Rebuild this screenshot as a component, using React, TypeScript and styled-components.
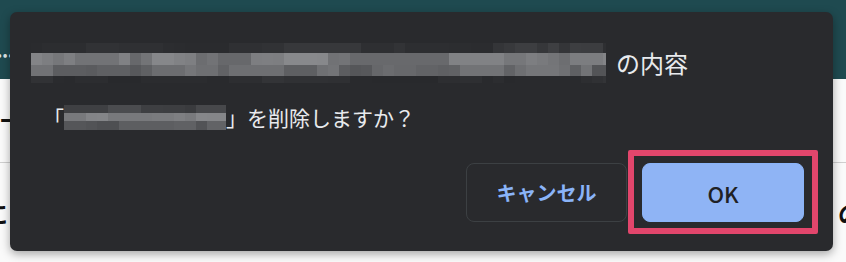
import styled, { createGlobalStyle } from "styled-components";

const GlobalStyle = createGlobalStyle`
  html, body {
    margin: 0;
    padding: 0;
    background: #fafafa;
    overflow: hidden;
  }
  * {
    box-sizing: border-box;
  }
`;

type Band = { h: number; lo: number; hi: number; curve: number };

// deterministic noise so the redaction looks the same on every render
const makeRandom = (seed: number) => {
  let s = seed;
  return () => {
    s = (s + 0x6d2b79f5) | 0;
    let t = Math.imul(s ^ (s >>> 15), 1 | s);
    t = (t + Math.imul(t ^ (t >>> 7), 61 | t)) ^ t;
    return ((t ^ (t >>> 14)) >>> 0) / 4294967296;
  };
};

const Redacted = ({
  width,
  bands,
  cell,
  seed,
}: {
  width: number;
  bands: Band[];
  cell: number;
  seed: number;
}) => {
  const rnd = makeRandom(seed);
  const height = bands.reduce((a, b) => a + b.h, 0);
  const cols = Math.ceil(width / cell);
  const rects: JSX.Element[] = [];
  let y = 0;
  bands.forEach((band, bi) => {
    let prev = rnd();
    for (let c = 0; c < cols; c++) {
      // smooth neighbours a bit, like a pixelated blur
      const r = rnd() < 0.5 ? prev : prev * 0.4 + rnd() * 0.6;
      prev = r;
      const v = Math.round(band.lo + Math.pow(r, band.curve) * (band.hi - band.lo));
      rects.push(
        <rect
          key={`${bi}-${c}`}
          x={c * cell}
          y={y}
          width={cell + 0.5}
          height={band.h + 0.5}
          fill={`rgb(${v},${v + 1},${v + 4})`}
        />
      );
    }
    y += band.h;
  });
  return (
    <svg width={width} height={height} viewBox={`0 0 ${width} ${height}`} style={{ flexShrink: 0, display: "block" }}>
      {rects}
    </svg>
  );
};

const Page = styled.div`
  position: relative;
  width: 846px;
  height: 262px;
  overflow: hidden;
  font-family: "Noto Sans CJK JP", "Noto Sans", sans-serif;
`;

const Header = styled.div`
  height: 79px;
  background: #1f4a50;
  display: flex;
  align-items: center;
  padding-top: 28px;
`;

const Ellipsis = styled.span`
  color: #dfe6e7;
  font-size: 14px;
  margin-left: -3px;
  letter-spacing: 1px;
`;

const Row = styled.div<{ $h: number; $line?: boolean }>`
  height: ${(p) => p.$h}px;
  display: flex;
  align-items: center;
  justify-content: space-between;
  border-bottom: ${(p) => (p.$line ? "1px solid #cfcfcf" : "none")};
  color: #111;
  font-size: 24px;
  font-weight: 700;
`;

const Fragment = styled.span<{ $shift: number }>`
  margin-left: ${(p) => (p.$shift < 0 ? p.$shift : 0)}px;
  margin-right: ${(p) => (p.$shift > 0 ? -p.$shift : 0)}px;
`;

const Dialog = styled.div`
  position: absolute;
  top: 12px;
  left: 10px;
  width: 823px;
  height: 239px;
  background: #292a2d;
  border-radius: 7px;
  box-shadow: 0 3px 10px rgba(0, 0, 0, 0.35);
  padding: 31px 29px 29px 33px;
  display: flex;
  flex-direction: column;
  color: #e8eaed;
`;

const Title = styled.div`
  display: flex;
  align-items: center;
  gap: 10px;
  height: 40px;
  margin-left: -12px;
  font-size: 24px;
  line-height: 1;
`;

const Message = styled.div`
  display: flex;
  align-items: center;
  height: 25px;
  margin-top: 22px;
  font-size: 21px;
  line-height: 1;
`;

const Actions = styled.div`
  margin-top: auto;
  display: flex;
  justify-content: flex-end;
  gap: 15px;
`;

const Button = styled.button<{ $primary?: boolean }>`
  width: ${(p) => (p.$primary ? 162 : 161)}px;
  height: 59px;
  border-radius: 8px;
  border: 1px solid ${(p) => (p.$primary ? "#8ab4f8" : "#3c4043")};
  background: ${(p) => (p.$primary ? "#8fb4f5" : "transparent")};
  color: ${(p) => (p.$primary ? "#202124" : "#8ab4f8")};
  font-family: "Noto Sans CJK JP", "Noto Sans", sans-serif;
  font-size: ${(p) => (p.$primary ? 22 : 20)}px;
  font-weight: ${(p) => (p.$primary ? 500 : 700)};
  padding: 0;
  cursor: pointer;
`;

const Highlight = styled.div`
  position: relative;
  &::after {
    content: "";
    position: absolute;
    inset: -13px -14px -12px -14px;
    border: 6px solid #e2466c;
    border-radius: 2px;
    pointer-events: none;
  }
`;

export default function App() {
  return (
    <>
      <GlobalStyle />
      <Page>
        <Header>
          <Ellipsis>•••</Ellipsis>
        </Header>
        <Row $h={84} $line>
          <Fragment $shift={0}>十</Fragment>
        </Row>
        <Row $h={99}>
          <Fragment $shift={-16}>に</Fragment>
          <Fragment $shift={16}>の</Fragment>
        </Row>
        <Dialog role="dialog">
          <Title>
            <Redacted
              width={575}
              cell={11}
              seed={7}
              bands={[
                { h: 10, lo: 42, hi: 72, curve: 3 },
                { h: 12, lo: 80, hi: 145, curve: 0.8 },
                { h: 11, lo: 62, hi: 128, curve: 1 },
                { h: 7, lo: 40, hi: 62, curve: 3 },
              ]}
            />
            <span>の内容</span>
          </Title>
          <Message>
            <span>「</span>
            <Redacted
              width={162}
              cell={11}
              seed={21}
              bands={[
                { h: 8, lo: 52, hi: 92, curve: 1.5 },
                { h: 8, lo: 100, hi: 145, curve: 0.8 },
                { h: 9, lo: 62, hi: 110, curve: 1 },
              ]}
            />
            <span>」を削除しますか？</span>
          </Message>
          <Actions>
            <Button>キャンセル</Button>
            <Highlight>
              <Button $primary>OK</Button>
            </Highlight>
          </Actions>
        </Dialog>
      </Page>
    </>
  );
}
